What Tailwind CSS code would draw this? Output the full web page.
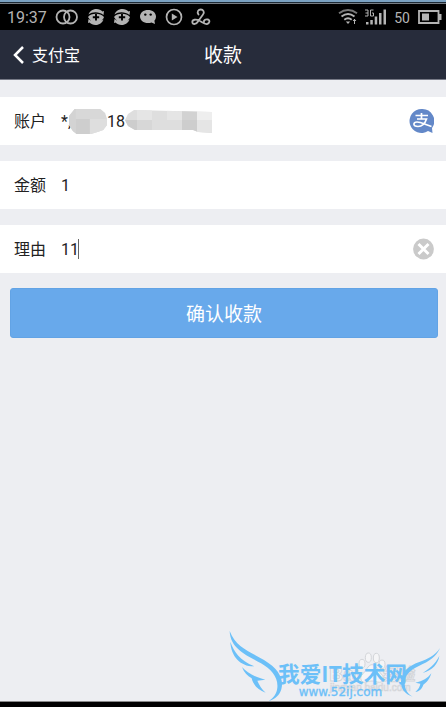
<!DOCTYPE html>
<html lang="zh-CN">
<head>
<meta charset="utf-8">
<meta name="viewport" content="width=device-width, initial-scale=1">
<title>收款</title>
<script src="https://cdn.jsdelivr.net/npm/@tailwindcss/browser@4"></script>
</head>
<body class="flex min-h-screen flex-col bg-[#edeef2] font-['Roboto','Noto_Sans_CJK_SC',sans-serif] text-[#222]">
  <div class="border-b border-[#777d84] bg-[#1c2a36]"><div class="mb-px h-0.5 bg-[#7ba2c2]"></div></div>

  <!-- Status bar -->
  <div class="flex h-[26px] items-center justify-between bg-black pr-1 pl-[7px] text-[#b4b4b4]">
    <div class="flex items-center gap-2">
      <span class="w-10 pt-0.5 text-base leading-6">19:37</span>
      <svg class="h-4 w-6" viewBox="0 0 24 16" fill="none" stroke="currentColor" stroke-width="1.8"><circle cx="8" cy="8" r="6.500"/><circle cx="15.500" cy="8" r="6.500"/></svg>
      <svg class="h-[18px] w-[18px]" viewBox="0 0 18 18"><path d="M1.500 6.500C3 2.500 6.500 1 9.500 1c2.500 0 4.500 1 6 2.500L17 3l-.5 4C12.500 3.800 6 3 1.500 6.500zM1 9C4 5 13 4.500 17 9c-1 3.500-4.500 5.500-8 5.500S3 12.500 1 9zM16.500 11.500C15 15.500 11.500 17 8.500 17c-2.500 0-4.500-1-6-2.500L1 15l.5-4c4 3.500 10.500 4 15 .5z" fill="currentColor"/><path d="M9 6v6.500M5.800 9.200h6.400" stroke="#000" stroke-width="1.900"/></svg>
      <svg class="h-[18px] w-[18px]" viewBox="0 0 18 18"><path d="M1.500 6.500C3 2.500 6.500 1 9.500 1c2.500 0 4.500 1 6 2.500L17 3l-.5 4C12.500 3.800 6 3 1.500 6.500zM1 9C4 5 13 4.500 17 9c-1 3.500-4.500 5.500-8 5.500S3 12.500 1 9zM16.500 11.500C15 15.500 11.500 17 8.500 17c-2.500 0-4.500-1-6-2.500L1 15l.5-4c4 3.500 10.500 4 15 .5z" fill="currentColor"/><path d="M9 6v6.500M5.800 9.200h6.400" stroke="#000" stroke-width="1.900"/></svg>
      <svg class="h-[18px] w-[18px]" viewBox="0 0 18 18"><path d="M9 2C4.500 2 1 4.700 1 8.500S4.500 15 9 15c1.300 0 2.500-.2 3.500-.6L16 16l-.6-3.300C16.500 11.500 17 10 17 8.500 17 4.700 13.500 2 9 2z" fill="currentColor"/><circle cx="6.300" cy="6.600" r="1.200"/><circle cx="11.700" cy="6.600" r="1.200"/></svg>
      <svg class="h-[18px] w-[18px]" viewBox="0 0 18 18"><circle cx="9" cy="9" r="7.500" fill="none" stroke="currentColor" stroke-width="1.700"/><path d="M6.800 5.500v7L12.500 9z" fill="currentColor"/></svg>
      <svg class="h-[18px] w-5" viewBox="0 0 20 18" fill="none" stroke="currentColor" stroke-width="1.800" stroke-linecap="round"><path d="M7.500 6.500C5.500 3.500 7.500 1.500 9.800 1.500S14 4 12 6.500L7 13.500C5 17 1.300 16.500 1.300 14S5 11 8 12.500s5.500 4 8 3.500 3.500-4 .8-4.500-4.300 1-3.800 2.500"/></svg>
    </div>
    <div class="flex items-center">
      <svg class="h-[18px] w-5" viewBox="0 0 20 18" fill="none" stroke="currentColor" stroke-width="1.900"><path d="M1 5.200Q10-1.200 19 5.200" stroke="#777"/><path d="M3.500 8.500Q10 3.500 16.500 8.500M6.300 11.700q3.700-2.800 7.400 0"/><path d="M7.800 13.500h4.400L10 16z" fill="currentColor" stroke="none"/><path d="M16.500 11v5M15 13l1.500-1.700L18 13" stroke-width="1"/></svg>
      <svg class="ml-1.5 h-[18px] w-6" viewBox="0 0 24 18"><path d="M1 2h3v6H1M1.500 5H4M9.500 2H6.500v6h3V5H8" fill="none" stroke="currentColor" stroke-width="1"/><path d="M2 14h2.500v2.500H2zM6.300 12h2.500v4.500H6.300zM10.700 8.500h2.500v8h-2.500zM15 5h2.500v11.500H15zM19.500 1.500H22v15h-2.500z" fill="currentColor"/></svg>
      <span class="ml-1.5 pt-0.5 text-sm leading-6">50</span>
      <svg class="ml-2 h-4 w-6" viewBox="0 0 24 16"><path d="M1 2h19.500v12H1z" fill="none" stroke="currentColor" stroke-width="1.800"/><path d="M4 4.500h7v7H4zM21 5h2.500v6H21z" fill="currentColor"/></svg>
    </div>
  </div>

  <header class="grid h-[50px] grid-cols-3 items-center border-b border-[#777a86] bg-[#272c3b] pt-0.5 text-white">
    <a href="#" class="flex items-center gap-2 pl-3 text-base leading-6">
      <svg class="h-5 w-3" viewBox="0 0 12 20" fill="none" stroke="currentColor" stroke-width="2.500"><path d="M11 1 3 9l8 8"/></svg>支付宝
    </a>
    <h1 class="text-center text-[19px] leading-6">收款</h1>
  </header>

  <main class="flex-1">
    <form class="flex flex-col gap-4 pt-4">
      <div class="mt-px flex h-12 items-center bg-white pr-3 pl-3.5 text-base">
        <span class="w-[47px] pt-0.5">账户</span>
        <span class="flex flex-1 items-center text-base"><span class="w-2 pt-0.5 whitespace-nowrap">*,</span>
          <svg class="h-[26px] w-[38px]" viewBox="0 0 40 26" preserveAspectRatio="none" role="img" aria-label="已隐藏"><clipPath id="a"><path d="M6 1h27l5 4 2 6v6l-4 5-6 2-7 2H8l-4-3-4-6V8z"/></clipPath><g clip-path="url(#a)"><path fill="#d8d8d8" d="M0 0h40v26H0z"/><path fill="#cecece" d="M7 11h15v15H7z"/><path fill="#d3d3d3" d="M0 0h7v26H0z"/><path fill="#dedede" d="M22 11h18v15H22z"/></g></svg>
          <span class="pt-0.5">18</span>
          <svg class="h-6 w-[87px]" viewBox="0 0 87 24" role="img" aria-label="已隐藏"><clipPath id="b"><path d="M0 11 3 5l6-4 78 2v21l-14-1-5-2H10l-7-4z"/></clipPath><g clip-path="url(#b)"><path fill="#dedede" d="M0 0h87v24H0z"/><path fill="#cdcdcd" d="M0 11h12v13H0zM57 11h15v13H57z"/><path fill="#d2d2d2" d="M57 0h15v11H57z"/><path fill="#e5e5e5" d="M12 0h15v11H12zM42 0h15v11H42zM72 11h15v13H72z"/><path fill="#eee" d="M72 0h15v11H72z"/><path fill="#d7d7d7" d="M12 11h15v13H12z"/></g></svg>
        </span>
        <button type="button" aria-label="支付宝账户"><svg class="block h-[26px] w-[26px]" viewBox="0 0 26 26"><path d="M13.500 1a12 12 0 1 0 6.500 22.100L24.500 25l-.5-5A12 12 0 0 0 13.500 1z" fill="#6388c8"/><path d="M7.500 7.500h12.500M13.500 5v6M9 11h9.500c-1.500 4.500-4.500 7.500-8.500 7.500-5.500 0-5-4.500-1-4.500 4 0 8 2.500 14.500 4.500" fill="none" stroke="#fff" stroke-width="1.700"/></svg></button>
      </div>
      <div class="flex h-12 items-center bg-white pr-3 pl-3.5 text-base">
        <label for="amount" class="w-[47px] pt-0.5">金额</label>
        <input id="amount" type="text" inputmode="decimal" value="1" class="min-w-0 flex-1 bg-transparent pt-0.5 text-base outline-none">
      </div>
      <div class="flex h-12 items-center bg-white pr-3 pl-3.5 text-base">
        <label for="reason" class="w-[47px] pt-0.5">理由</label>
        <div class="relative flex min-w-0 flex-1 items-center">
          <input id="reason" type="text" value="11" class="min-w-0 flex-1 bg-transparent pt-0.5 text-base caret-transparent outline-none">
          <span class="absolute left-[17px] h-5 w-px bg-[#666]"></span>
        </div>
        <button type="button" aria-label="清除"><svg class="block h-[22px] w-[22px]" viewBox="0 0 22 22"><circle cx="11.500" cy="11" r="10.400" fill="#cacaca"/><path d="m6.500 6 10 10M16.500 6l-10 10" stroke="#fff" stroke-width="2.900"/></svg></button>
      </div>
      <button type="submit" class="-mt-px mr-2 ml-2.5 h-[50px] rounded-[3px] border border-[#62a3e5] bg-[#68a9eb] pt-1 text-[19px] text-white">确认收款</button>
    </form>
  </main>

  <footer class="relative h-1.5 border-t border-[#888] bg-black">
    <svg class="absolute right-0 bottom-0 h-[87px] w-[226px]" viewBox="0 0 678 261">
      <g fill="#f5f5f7" stroke="#d3d5d9" stroke-width="3">
        <ellipse cx="426" cy="131" rx="9" ry="13"/><ellipse cx="445" cy="113" rx="9" ry="14"/><ellipse cx="469" cy="114" rx="9" ry="14"/><ellipse cx="486" cy="133" rx="9" ry="13"/><path d="M456 134c-12 0-18 20-28 28-12 12-4 29 12 24 12-4 20-4 32 0 18 5 24-13 12-24-10-9-16-28-28-28z"/>
        <text x="328" y="184" font-size="58" font-weight="700" font-family="Liberation Sans, sans-serif">Bai</text>
        <text x="490" y="181" font-size="48" font-weight="700" font-family="Noto Sans CJK SC, sans-serif">经验</text>
        <text x="330" y="214" font-size="30" stroke-width="2" font-family="Liberation Sans, sans-serif">jingyan.baidu.com</text>
      </g>
      <g fill="#6cc0f8">
        <path d="M29 33C47 82 88 94 132 120c46 28 60 58 52 88-5 17-18 30-38 35 15-10 24-22 26-40 3-31-18-55-49-73C83 107 31 88 29 33z"/>
        <path d="M31 65c11 30 27 55 72 74C61 140 33 109 31 65zM66 141c15 17 35 29 70 38l-24 3c5 12 13 25 25 36-24-9-38-25-42-43-13-8-23-18-29-34z"/>
        <path d="M660 84c-10 25-34 41-62 53-29 13-46 31-44 54 1 17 8 30 24 39-24-7-36-25-35-46 2-31 26-47 53-57 28-11 49-19 64-43z"/>
        <path d="M658 108c-4 24-20 42-50 51 22-14 36-25 50-51zM634 160c-6 19-14 28-24 34-4 13-12 19-24 22 9-8 14-17 15-25l-15-3c23-4 36-13 48-28z"/>
        <text x="174" y="187" font-size="65" font-weight="700" font-family="Noto Sans CJK SC, sans-serif">我爱IT技术网</text>
        <text x="236" y="227" font-size="36" font-family="DejaVu Sans, sans-serif" stroke="#6cc0f8" stroke-width="1">www.52ij.com</text>
      </g>
    </svg>
  </footer>
</body>
</html>
